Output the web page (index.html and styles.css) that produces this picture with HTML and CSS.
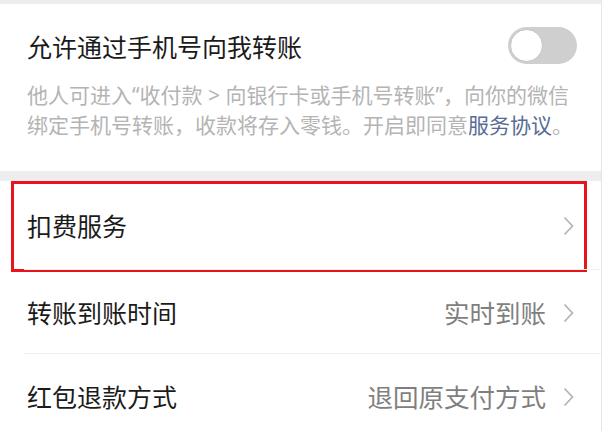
FILE: index.html
```html
<!DOCTYPE html>
<html lang="zh-CN">
<head>
  <meta charset="UTF-8">
  <title>支付设置</title>
  <meta name="viewport" content="width=device-width, initial-scale=1.0">
  <link rel="stylesheet" href="styles.css">
</head>
<body>
  <div class="page">
    <div class="gap gap-top"></div>

    <section class="card phone-card">
      <div class="switch-row">
        <span class="row-title">允许通过手机号向我转账</span>
        <span class="toggle"><span class="knob"></span></span>
      </div>
      <p class="desc">
        <span class="desc-line">他人可进入“收付款 &gt; 向银行卡或手机号转账”，向你的微信</span>
        <span class="desc-line">绑定手机号转账，收款将存入零钱。开启即同意<a class="link" href="#">服务协议</a>。</span>
      </p>
    </section>

    <div class="gap gap-mid"></div>

    <section class="card list">
      <div class="row row-first marked">
        <span class="row-title">扣费服务</span>
        <span class="row-right">
          <svg class="chevron" width="11" height="20" viewBox="0 0 11 20"><polyline points="1.5,1.5 9.5,10 1.5,18.5" fill="none" stroke="#b3b3b3" stroke-width="1.7"/></svg>
        </span>
      </div>
      <div class="row">
        <span class="row-title">转账到账时间</span>
        <span class="row-right">
          <span class="value">实时到账</span>
          <svg class="chevron" width="11" height="20" viewBox="0 0 11 20"><polyline points="1.5,1.5 9.5,10 1.5,18.5" fill="none" stroke="#b3b3b3" stroke-width="1.7"/></svg>
        </span>
      </div>
      <div class="row">
        <span class="row-title">红包退款方式</span>
        <span class="row-right">
          <span class="value">退回原支付方式</span>
          <svg class="chevron" width="11" height="20" viewBox="0 0 11 20"><polyline points="1.5,1.5 9.5,10 1.5,18.5" fill="none" stroke="#b3b3b3" stroke-width="1.7"/></svg>
        </span>
      </div>
    </section>
  </div>
</body>
</html>
```

FILE: styles.css
```css
body {
  margin: 0;
  background: #fff;
  font-family: "Noto Sans", "Noto Sans CJK SC", sans-serif;
  color: #1b1b1b;
  overflow: hidden;
}
.page {
  width: 602px;
  height: 431px;
  border-right: 1px solid #e6e6e6;
  box-sizing: border-box;
}
.gap { background: #ededed; }
.gap-top { height: 4px; }
.gap-mid { height: 10px; }
.card { background: #fff; }

.phone-card { padding: 23px 24px 31px 27px; }
.switch-row {
  display: flex; justify-content: space-between; align-items: center;
  height: 37px;
}
.row-title { font-size: 25px; line-height: 36px; position: relative; top: 1px; }
.toggle {
  width: 69px; height: 37px; border-radius: 19px; background: #cfcfcf;
  display: flex; align-items: center; padding-left: 2px; box-sizing: border-box;
}
.knob {
  width: 33px; height: 33px; border-radius: 50%; background: #fff;
  box-sizing: border-box; border: 1px solid #c4c4c4;
}
.desc {
  margin: 16px 0 0; font-size: 21px; line-height: 30px; color: #b4b4b4;
  white-space: nowrap;
}
.desc-line { display: block; }
.link { color: #576b95; text-decoration: none; }

.list { padding-left: 24px; }
.row {
  display: flex; justify-content: space-between; align-items: center;
  height: 83px; padding: 0 27px 0 3px; border-top: 1px solid #f0f0f0;
  position: relative;
}
.row-first { height: 88px; border-top: none; }
.row-right { display: flex; align-items: center; gap: 17px; position: relative; top: 1px; }
.value { font-size: 25.5px; line-height: 36px; color: #7f7f7f; }
.chevron { display: block; }

/* red annotation frame drawn over the first row */
.marked::after {
  content: "";
  position: absolute;
  left: -13px; top: 0;
  width: 576px; height: 91px;
  border: 3px solid #e8141b;
  box-sizing: border-box;
}
```
